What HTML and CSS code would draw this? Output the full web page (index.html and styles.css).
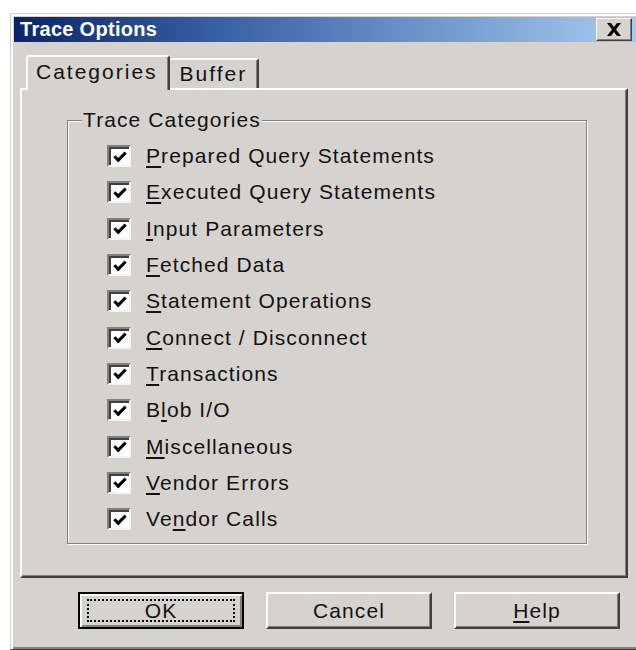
FILE: index.html
```html
<!DOCTYPE html>
<html lang="en">
<head>
<meta charset="utf-8">
<title>Trace Options</title>
<link rel="stylesheet" href="styles.css">
</head>
<body>
<div class="dialog">
  <div class="titlebar">
    <span class="title">Trace Options</span>
    <button class="close" aria-label="Close">
      <svg width="18" height="15" viewBox="0 0 18 15"><path d="M2 1h4l3 4 3-4h4l-5 6.5L16 14h-4l-3-4-3 4H2l5-6.5z" fill="#000"/></svg>
    </button>
  </div>

  <div class="tabs">
    <div class="tab active">Categories</div>
    <div class="tab">Buffer</div>
  </div>

  <div class="panel">
    <fieldset class="group">
      <legend>Trace Categories</legend>
      <ul class="options">
        <li><span class="check"></span><span><u>P</u>repared Query Statements</span></li>
        <li><span class="check"></span><span><u>E</u>xecuted Query Statements</span></li>
        <li><span class="check"></span><span><u>I</u>nput Parameters</span></li>
        <li><span class="check"></span><span><u>F</u>etched Data</span></li>
        <li><span class="check"></span><span><u>S</u>tatement Operations</span></li>
        <li><span class="check"></span><span><u>C</u>onnect / Disconnect</span></li>
        <li><span class="check"></span><span><u>T</u>ransactions</span></li>
        <li><span class="check"></span><span>B<u>l</u>ob I/O</span></li>
        <li><span class="check"></span><span><u>M</u>iscellaneous</span></li>
        <li><span class="check"></span><span><u>V</u>endor Errors</span></li>
        <li><span class="check"></span><span>Ve<u>n</u>dor Calls</span></li>
      </ul>
    </fieldset>
  </div>

  <div class="buttons">
    <button class="btn default"><span class="focus">OK</span></button>
    <button class="btn">Cancel</button>
    <button class="btn"><u>H</u>elp</button>
  </div>
</div>
</body>
</html>
```
FILE: styles.css
```css
html, body {
  margin: 0;
  padding: 0;
  background: #fff;
  overflow: hidden;
}

body {
  font-family: "Liberation Sans", Arial, sans-serif;
  font-size: 21px;
  letter-spacing: 1.1px;
  color: #111;
}

u { text-decoration-thickness: 2px; text-underline-offset: 3px; }

/* window frame: its right edge is cut off, so only three sides are drawn */
.dialog {
  margin: 13px 0 0 10px;
  width: 626px;
  height: 637px;
  background: #d6d3ce;
  border: 1px solid #d4d0c8;
  border-right: none;
  border-bottom-color: #404040;
  box-shadow: inset 2px 2px #fff, inset 0 -2px #808080;
  padding: 3px 0 3px 3px;
  box-sizing: border-box;
  display: flex;
  flex-direction: column;
}

.titlebar {
  height: 25px;
  background: linear-gradient(to right, #0a246a 0%, #3b64a8 35%, #a6caf0 100%);
  display: flex;
  align-items: center;
  justify-content: space-between;
  padding: 0 4px 0 6px;
}

.title {
  color: #fff;
  font-weight: bold;
  font-size: 20px;
  letter-spacing: 0.3px;
}

.close {
  width: 36px;
  height: 23px;
  padding: 0;
  background: #d6d3ce;
  border: 1px solid #fff;
  border-right-color: #404040;
  border-bottom-color: #404040;
  box-shadow: inset -1px -1px #808080;
  display: flex;
  align-items: center;
  justify-content: center;
}

.tabs {
  display: flex;
  align-items: flex-end;
  margin: 12px 0 0 12px;
  height: 34px;
  position: relative;
  z-index: 1;
}

.tab {
  height: 30px;
  padding: 0 10px;
  letter-spacing: 2px;
  display: flex;
  align-items: center;
  border-top: 2px solid #fff;
  border-left: 2px solid #fff;
  border-right: 2px solid #404040;
  border-radius: 3px 3px 0 0;
  box-shadow: inset -1px 0 #808080;
  background: #d6d3ce;
  box-sizing: border-box;
}

.tab.active {
  height: 35px;
  margin-bottom: -2px;
  padding: 0 10px 4px 8px;
}

.tab:not(.active) {
  border-left: none;
}

.panel {
  margin: 0 8px 0 6px;
  height: 490px;
  border-top: 2px solid #fff;
  border-left: 2px solid #fff;
  border-right: 2px solid #404040;
  border-bottom: 2px solid #404040;
  box-shadow: inset -1px -1px #808080;
  box-sizing: border-box;
  padding: 18px 39px 0 45px;
}

.group {
  margin: 0;
  padding: 6px 0 6px 39px;
  border: 1px solid #808080;
  box-shadow: inset 1px 1px #fff, 1px 1px #fff;
}

.group legend {
  margin-left: -25px;
  padding: 0 1px;
  line-height: 24px;
  background: #d6d3ce;
}

.options {
  list-style: none;
  margin: 0;
  padding: 0;
  display: flex;
  flex-direction: column;
}

.options li {
  height: 36.3px;
  display: flex;
  align-items: center;
  gap: 15px;
}

.check {
  width: 24px;
  height: 22px;
  box-sizing: border-box;
  flex: none;
  background: #fff;
  border: 2px solid #808080;
  border-right-color: #f4f4f4;
  border-bottom-color: #f4f4f4;
  box-shadow: inset 2px 2px #404040;
  display: flex;
  align-items: center;
  justify-content: center;
}

.check::after {
  content: "";
  width: 9px;
  height: 4px;
  border-left: 3px solid #000;
  border-bottom: 3px solid #000;
  transform: translate(1px, -1px) rotate(-45deg);
}

.buttons {
  display: flex;
  gap: 22px;
  margin: 14px 0 0 64px;
}

.btn {
  width: 166px;
  height: 37px;
  font: inherit;
  letter-spacing: inherit;
  background: #d6d3ce;
  color: #111;
  border: 2px solid #fff;
  border-right-color: #404040;
  border-bottom-color: #404040;
  box-shadow: inset -1px -1px #808080;
  padding: 0;
}

.btn.default {
  border: 2px solid #000;
  box-shadow: inset 2px 2px #fff, inset -2px -2px #808080;
  display: flex;
  align-items: center;
  justify-content: center;
}

.btn .focus {
  display: flex;
  align-items: center;
  justify-content: center;
  width: calc(100% - 14px);
  height: calc(100% - 10px);
  border: 2px dotted #000;
  box-sizing: border-box;
}
```
